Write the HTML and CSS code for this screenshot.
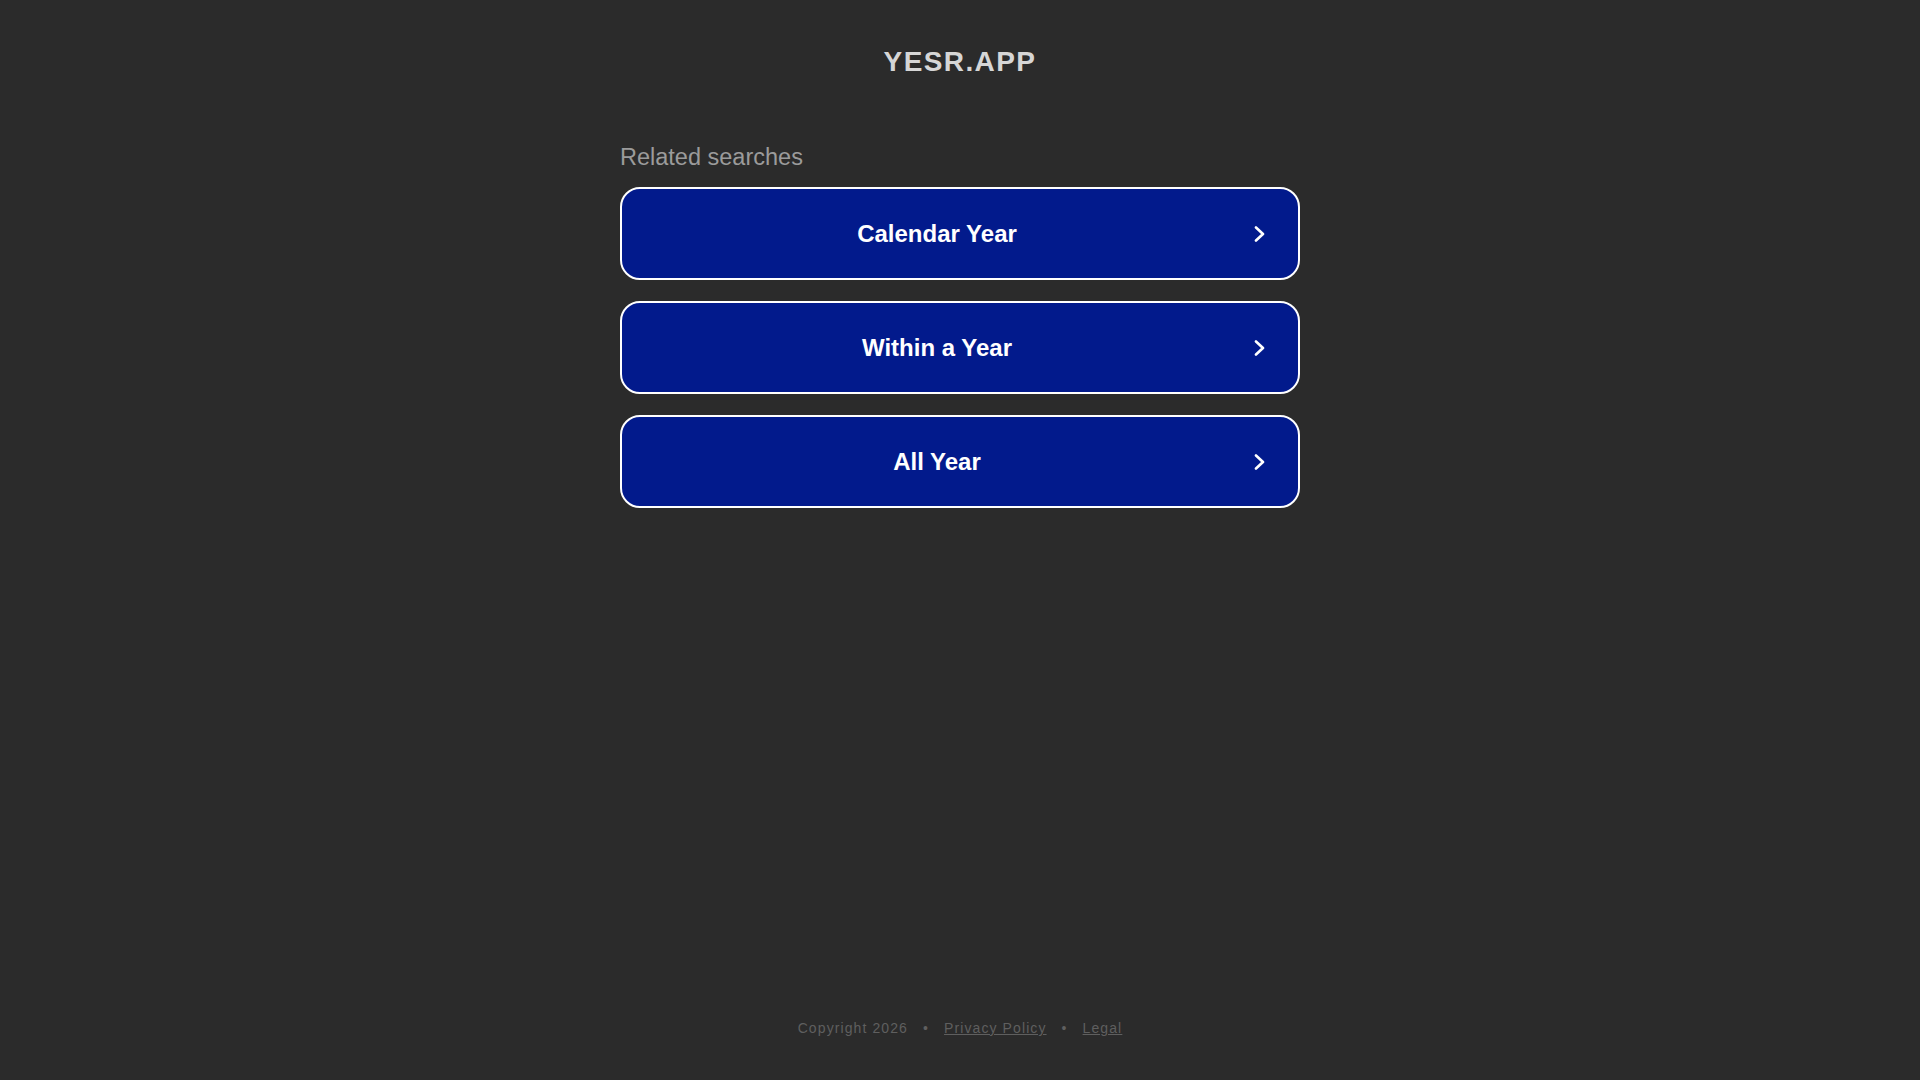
FILE: index.html
```html
<!DOCTYPE html>
<html lang="en">
<head>
    <meta charset="UTF-8">
    <meta name="viewport" content="width=device-width, initial-scale=1.0">
    <title>yesr.app</title>
    <link rel="stylesheet" href="styles.css">
</head>
<body>

    <!-- Domain title -->
    <header class="site-header">
        <h1>YESR.APP</h1>
    </header>

    <main class="searches">
        <p class="searches-title">Related searches</p>

        <a class="search-btn" href="#">
            <span class="search-text">Calendar Year</span>
            <svg class="search-arrow" viewBox="0 0 14 16" width="14" height="16">
                <path d="M3 1.5 L10 8 L3 14.5" />
            </svg>
        </a>
        <a class="search-btn" href="#">
            <span class="search-text">Within a Year</span>
            <svg class="search-arrow" viewBox="0 0 14 16" width="14" height="16">
                <path d="M3 1.5 L10 8 L3 14.5" />
            </svg>
        </a>
        <a class="search-btn" href="#">
            <span class="search-text">All Year</span>
            <svg class="search-arrow" viewBox="0 0 14 16" width="14" height="16">
                <path d="M3 1.5 L10 8 L3 14.5" />
            </svg>
        </a>
    </main>

    <footer class="site-footer">
        <span>Copyright 2026</span>
        <span class="dot">&bull;</span>
        <a href="#">Privacy Policy</a>
        <span class="dot">&bull;</span>
        <a href="#">Legal</a>
    </footer>

</body>
</html>
```

FILE: styles.css
```css
body {
    font-family: "Liberation Sans", Arial, sans-serif;
    background-color: #2b2b2b;
    margin: 0;
    min-height: 100vh;
    display: flex;
    flex-direction: column;
    align-items: center;
}

/* Header */
.site-header {
    padding-top: 45px;
}

.site-header h1 {
    margin: 0;
    font-size: 28px;
    line-height: 34px;
    letter-spacing: 1.4px;
    font-weight: 700;
    color: #d6d6d6;
    text-align: center;
}

/* Related searches */
.searches {
    width: 680px;
    margin-top: 64px;
    display: flex;
    flex-direction: column;
    gap: 21px;
}

.searches-title {
    margin: 0 0 -5px;
    font-size: 23.5px;
    line-height: 28px;
    color: #9b9b9b;
}

.search-btn {
    box-sizing: border-box;
    height: 93px;
    display: flex;
    align-items: center;
    gap: 21px;
    padding: 0 31px 0 20px;
    background-color: #021a8c;
    border: 2px solid #fff;
    border-radius: 20px;
    text-decoration: none;
}

.search-text {
    flex: 1;
    text-align: center;
    color: #fff;
    font-size: 24px;
    font-weight: 700;
}

.search-arrow {
    flex-shrink: 0;
}

.search-arrow path {
    fill: none;
    stroke: #fff;
    stroke-width: 2.6;
    stroke-linecap: round;
    stroke-linejoin: round;
}

/* Footer */
.site-footer {
    margin-top: auto;
    padding-bottom: 42px;
    font-size: 14px;
    line-height: 20px;
    letter-spacing: 1.1px;
    color: #5f5f5f;
}

.site-footer a {
    color: #5f5f5f;
}

.site-footer .dot {
    margin: 0 10px;
}
```
